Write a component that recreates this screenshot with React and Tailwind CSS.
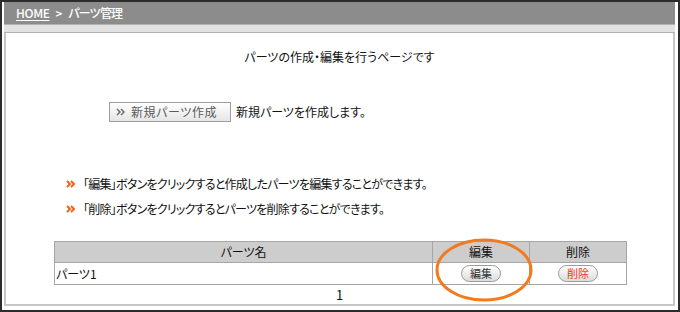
import React from 'react';

// Parts management page: breadcrumb header, intro, create button, help lines and parts table.
const JP = { fontFamily: '"Noto Sans CJK JP", "Noto Sans", sans-serif', fontFeatureSettings: '"palt"' };

// Double chevron marker used on the create button and the help lines
const Chevrons = ({ className, color, width = 2 }) => (
  <svg className={className} width="9" height="8" viewBox="0 0 9 8" fill="none" stroke={color} strokeWidth={width} strokeLinejoin="miter">
    <path d="M1 1l3 3-3 3" />
    <path d="M5 1l3 3-3 3" />
  </svg>
);

const PillButton = ({ label, danger }) => (
  <button
    type="button"
    className={`h-[17px] w-[40px] rounded-full border border-[#9a9a9a] bg-gradient-to-b from-white to-[#dcdcdc] text-[11px] leading-[15px] ${danger ? 'text-[#ec3a12]' : 'text-[#333]'}`}
  >
    {label}
  </button>
);

const parts = [{ name: 'パーツ1' }];

function App() {
  return (
    <div
      className="relative flex h-[312px] w-[680px] flex-col border-2 border-[#2c2c2c] bg-white pb-[4px] pl-[2px] pr-[3px] text-[#111]"
      style={JP}
    >
      {/* Breadcrumb bar */}
      <div className="flex h-[22px] items-center bg-[#8c8c8c] pl-[12px] text-[12px] font-medium text-white">
        <span className="tracking-[-0.4px] underline underline-offset-2">HOME</span>
        <span className="mx-[6px]">&gt;</span>
        <span className="tracking-[-0.8px]">パーツ管理</span>
      </div>
      <div className="h-[9px] border-y border-[#b2b2b2] bg-[#e2e2e2]" />

      {/* Content */}
      <div className="flex flex-1 flex-col border-x-2 border-b-2 border-[#c6c6c6] text-[12px] leading-[16px]">
        <p className="mt-[16px] text-center">パーツの作成・編集を行うページです</p>

        <div className="mt-[37px] flex items-center pl-[103px]">
          <button
            type="button"
            className="flex h-[20px] w-[122px] items-center border border-[#9c9c9c] bg-gradient-to-b from-white to-[#e6e6e6] pl-[6px] text-left text-[12px] tracking-[0.6px] text-[#5a5a5a]"
          >
            <Chevrons className="mr-[6px]" color="#666" width={1.4} />
            新規パーツ作成
          </button>
          <span className="ml-[5px]">新規パーツを作成します。</span>
        </div>

        <ul className="mt-[54px] flex flex-col gap-[9px] pl-[60px]">
          <li className="flex items-center">
            <Chevrons className="mr-[8px]" color="#f06418" />
            <span className="tracking-[-0.75px]">「編集」ボタンをクリックすると作成したパーツを編集することができます。</span>
          </li>
          <li className="flex items-center">
            <Chevrons className="mr-[8px]" color="#f06418" />
            <span className="tracking-[-0.75px]">「削除」ボタンをクリックするとパーツを削除することができます。</span>
          </li>
        </ul>

        <table className="ml-[48px] mt-[24px] w-[573px] border-collapse border border-[#a6a6a6]">
          <thead>
            <tr className="h-[21px] bg-[#cdcdcd]">
              <th className="border border-[#a6a6a6] font-normal">パーツ名</th>
              <th className="w-[97px] border border-[#a6a6a6] font-normal">編集</th>
              <th className="w-[97px] border border-[#a6a6a6] font-normal">削除</th>
            </tr>
          </thead>
          <tbody>
            {parts.map((p) => (
              <tr key={p.name} className="h-[22px]">
                <td className="border border-[#a6a6a6] pl-[1px]">{p.name}</td>
                <td className="border border-[#a6a6a6] text-center">
                  <PillButton label="編集" />
                </td>
                <td className="border border-[#a6a6a6] text-center">
                  <PillButton label="削除" danger />
                </td>
              </tr>
            ))}
          </tbody>
        </table>

        <p className="mt-[2px] text-center text-[13px]">1</p>
      </div>

      {/* Annotation ring around the edit column */}
      <svg className="absolute left-[432px] top-[235px]" width="100" height="66" viewBox="0 0 100 66" fill="none">
        <ellipse cx="50" cy="33" rx="47" ry="30" stroke="#f27b1f" strokeWidth="3" />
      </svg>
    </div>
  );
}

export default App;
